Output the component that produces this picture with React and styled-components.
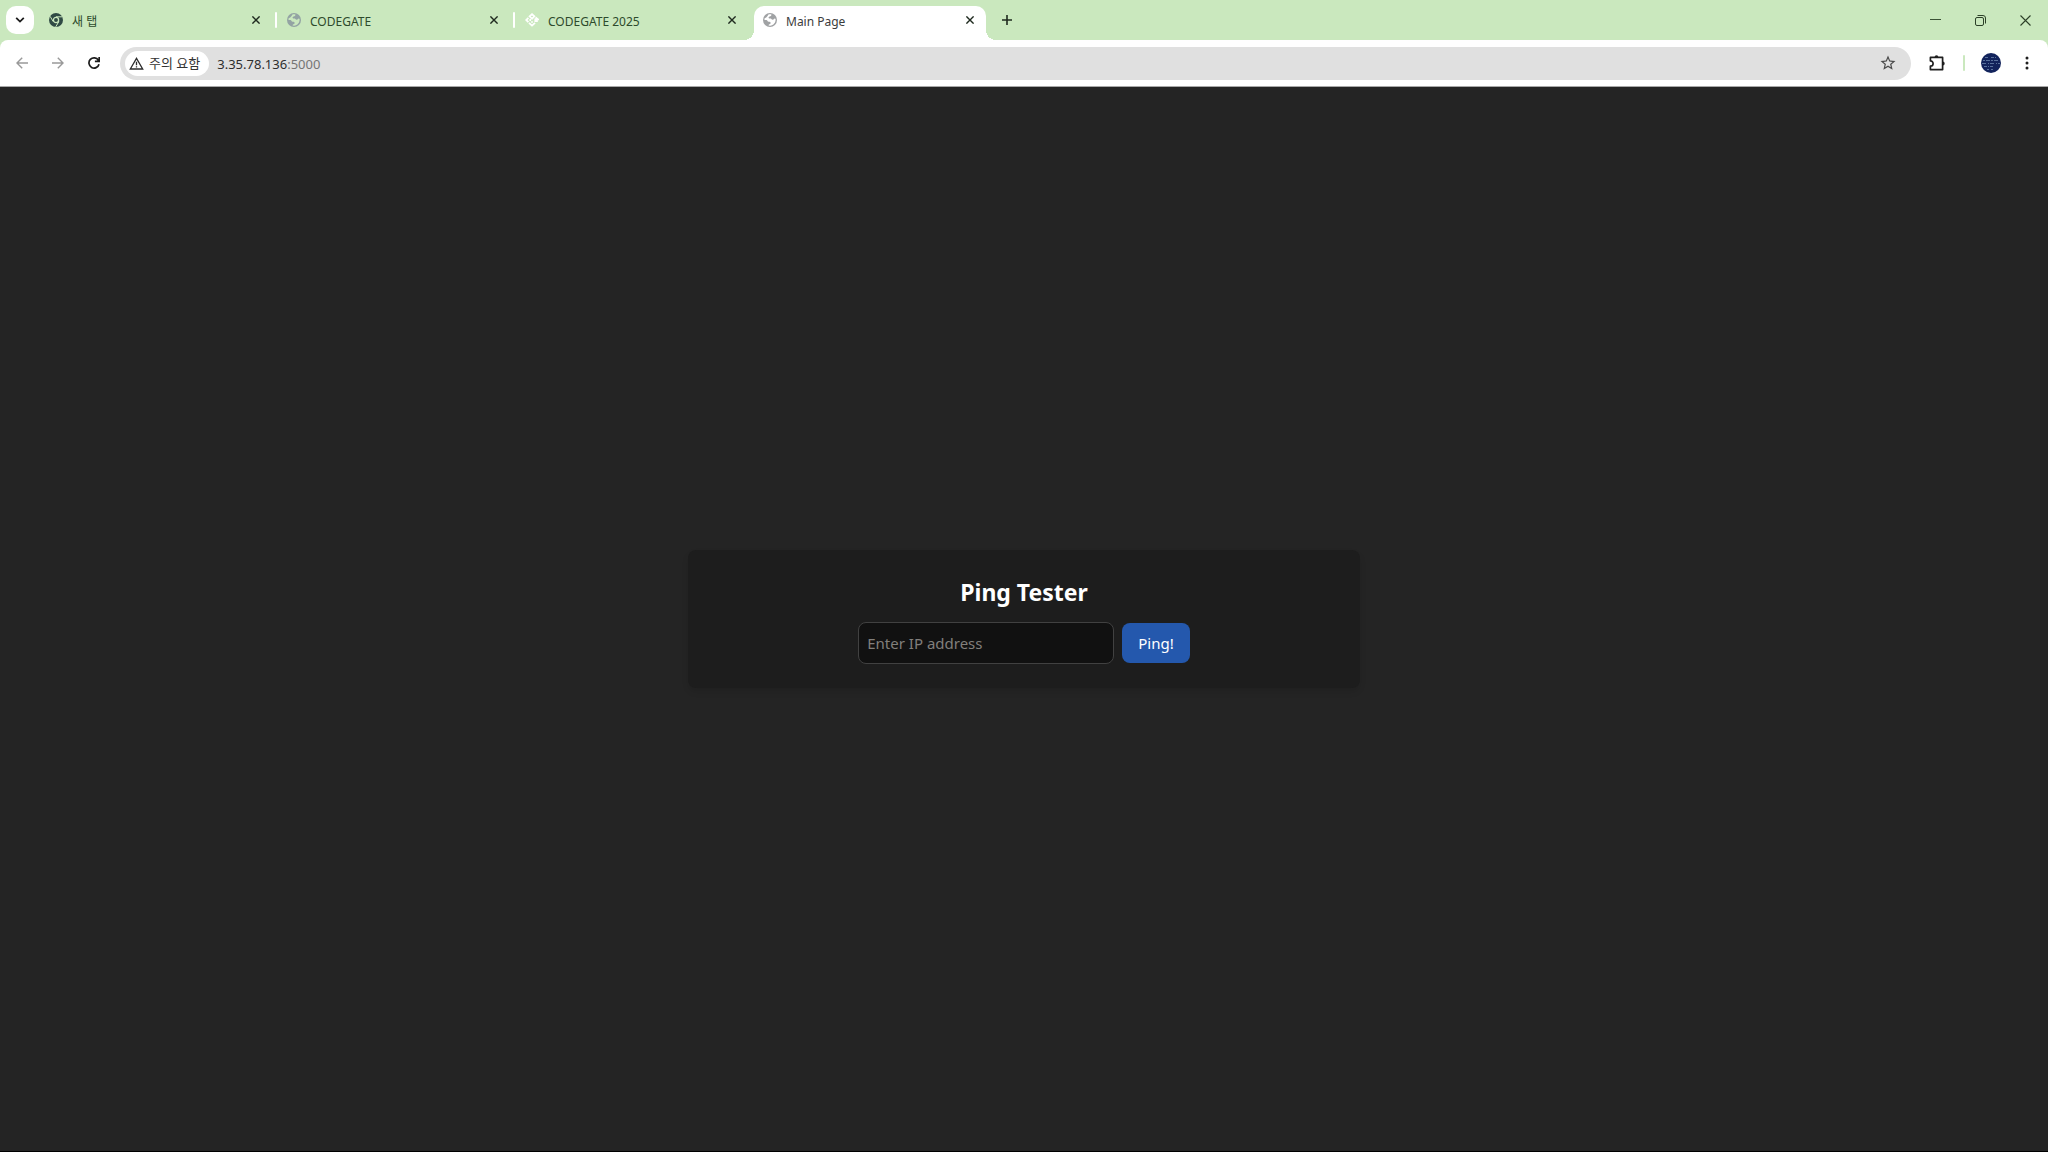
import React, { useState } from 'react';
import styled, { createGlobalStyle } from 'styled-components';

const GlobalStyle = createGlobalStyle`
* {
  box-sizing: border-box;
}
body {
  margin: 0;
  background-color: #000;
  font-family: "Noto Sans", "Noto Sans CJK KR", sans-serif;
}
button {
  border: none;
  background: none;
  padding: 0;
  font-family: inherit;
}
svg {
  display: block;
  flex-shrink: 0;
}
`;

const Window = styled.div`
  min-height: 100vh;
  display: flex;
  flex-direction: column;
  padding-bottom: 1px;
  background-color: #000;
`;

const TabStrip = styled.div`
  display: flex;
  align-items: center;
  height: 40px;
  padding-left: 6px;
  background-color: #cae8be;
`;

const TabSearch = styled.button`
  display: flex;
  align-items: center;
  justify-content: center;
  width: 28px;
  height: 28px;
  margin-right: 6px;
  border-radius: 10px;
  background-color: #fff;
`;

const Tabs = styled.div`
  display: flex;
  align-self: flex-end;
  gap: 6px;
`;

const Tab = styled.div`
  position: relative;
  display: flex;
  align-items: center;
  width: 232px;
  height: 34px;
  padding: 0 8px 6px 9px;
  border-radius: 10px 10px 0 0;
  background-color: ${({ $active }) => ($active ? '#fff' : 'transparent')};
  color: ${({ $active }) => ($active ? '#3c3c3c' : '#2d4a2c')};

  /* curved feet of the selected tab */
  &::before,
  &::after {
    content: '';
    display: ${({ $active }) => ($active ? 'block' : 'none')};
    position: absolute;
    bottom: 0;
    width: 10px;
    height: 10px;
  }
  &::before {
    right: 100%;
    background: radial-gradient(circle at 0 0, transparent 10px, #fff 10px);
  }
  &::after {
    left: 100%;
    background: radial-gradient(circle at 100% 0, transparent 10px, #fff 10px);
  }
`;

const TabTitle = styled.span`
  flex: 1;
  margin-left: 9px;
  padding-top: 4px;
  font-size: 12px;
  line-height: 16px;
  white-space: nowrap;
`;

const TabClose = styled.button`
  display: flex;
  align-items: center;
  justify-content: center;
  width: 16px;
  height: 16px;
`;

const TabDivider = styled.span`
  position: absolute;
  right: -5px;
  top: 6px;
  width: 2px;
  height: 16px;
  border-radius: 1px;
  background-color: #fff;
`;

const NewTab = styled.button`
  display: flex;
  align-items: center;
  justify-content: center;
  width: 28px;
  height: 28px;
  margin-left: 7px;
`;

const WindowButtons = styled.div`
  display: flex;
  margin-left: auto;
`;

const WindowButton = styled.button`
  display: flex;
  align-items: center;
  justify-content: center;
  width: 45px;
  height: 40px;
`;

const ToolbarBack = styled.div`
  background-color: #cae8be;
`;

const Toolbar = styled.div`
  display: flex;
  align-items: center;
  height: 47px;
  padding: 0 3px 0 4px;
  border-bottom: 1px solid #a8a8a8;
  border-radius: 8px 8px 0 0;
  background-color: #fff;
`;

const ToolButton = styled.button`
  display: flex;
  align-items: center;
  justify-content: center;
  width: 36px;
  height: 34px;
`;

const AddressBar = styled.div`
  display: flex;
  flex: 1;
  align-items: center;
  height: 33px;
  margin: 0 8px;
  padding: 0 14px 0 5px;
  border-radius: 17px;
  background-color: #e0e0e0;
`;

const SecurityChip = styled.button`
  display: flex;
  align-items: center;
  gap: 5px;
  height: 25px;
  padding: 0 9px 0 4px;
  border-radius: 13px;
  background-color: #fff;
  color: #333;
  font-size: 13px;
  line-height: 16px;
  white-space: nowrap;
`;

const Url = styled.span`
  flex: 1;
  margin-left: 8px;
  padding-top: 1px;
  color: #2e2e2e;
  font-size: 13px;
  line-height: 20px;

  span {
    color: #757575;
  }
`;

const ToolDivider = styled.span`
  width: 2px;
  height: 16px;
  margin: 0 8px;
  border-radius: 1px;
  background-color: #cae8be;
`;

const Page = styled.main`
  display: flex;
  flex: 1;
  align-items: center;
  justify-content: center;
  background-color: #242424;
`;

const Card = styled.section`
  width: 100%;
  max-width: 672px;
  padding: 24px;
  border-radius: 8px;
  background-color: #1d1d1d;
  box-shadow: 0 4px 6px rgba(0, 0, 0, 0.1);
  text-align: center;
`;

const Title = styled.h1`
  margin: 0 0 14px;
  padding-top: 2px;
  color: #fff;
  font-size: 23px;
  font-weight: 700;
  line-height: 32px;
`;

const PingForm = styled.form`
  display: flex;
  align-items: center;
  justify-content: center;
  gap: 8px;
`;

const AddressInput = styled.input`
  width: 256px;
  height: 42px;
  padding: 8px;
  border: 1px solid #414141;
  border-radius: 8px;
  outline: none;
  background-color: #111;
  color: #fff;
  font-family: inherit;
  font-size: 15px;

  &::placeholder {
    color: #817f7c;
    opacity: 1;
  }
`;

const PingButton = styled.button`
  height: 40px;
  padding: 0 16px;
  border-radius: 8px;
  background-color: #2458ad;
  color: #fff;
  font-size: 15px;
  line-height: 24px;
`;

const ChromeIcon = () => (
  <svg width="14" height="14" viewBox="0 0 14 14">
    <circle cx="7" cy="7" r="7" fill="#2f4a44" />
    <circle cx="7" cy="7" r="2.6" fill="none" stroke="#cae8be" strokeWidth="1.3" />
    <path d="M7 3.8H13.2M4.2 8.6L1.1 3.3M9.8 8.6L6.7 13.9" stroke="#cae8be" strokeWidth="1" />
  </svg>
);

const GlobeIcon = ({ color, land }) => (
  <svg width="14" height="14" viewBox="0 0 14 14">
    <circle cx="7" cy="7" r="7" fill={color} />
    <path
      d="M8.4 1.4C8.6 2.6 7.6 3.2 6.5 3.4C5.4 3.7 5.2 5 6.2 5.4C7.2 5.7 7.8 5.2 8.4 6C9 7.1 10.4 6.7 11.1 5.9C11.6 5.3 12.4 5.4 12.6 6.1C12.9 9.8 10.4 12.5 7.1 12.7L5.6 12.4C5.3 11.3 7.4 11.3 7.6 10.2C7.8 9.1 6.9 8.7 5.7 8.7C4.5 8.6 4.5 7.2 3.4 7L1.5 7C1.4 6.4 1.5 5.6 1.8 5C3 5.2 3.4 4.2 4.1 3.6C4.8 3 5 2 5.4 1.6C6.4 1.2 7.4 1.2 8.4 1.4Z"
      fill={land}
    />
  </svg>
);

const CodegateIcon = () => (
  <svg width="14" height="14" viewBox="0 0 14 14" fill="none" stroke="#fff" strokeWidth="1.8">
    <path d="M4.6 3.4L7 1.2L9.4 3.4L7 5.8Z" />
    <path d="M3.4 4.8L1.2 7L3.4 9.2M4 9.8L7 12.6L10 9.8" />
    <path d="M10.6 4.4L13 6.4H9.4M9.4 8.2H12.8M4.4 7H6M7 8.2V9.8" />
  </svg>
);

const CloseIcon = () => (
  <svg width="8" height="8" viewBox="0 0 8 8">
    <path d="M0.4 0.4L7.6 7.6M7.6 0.4L0.4 7.6" stroke="#1f2a1f" strokeWidth="1.4" />
  </svg>
);

const tabs = [
  { id: 1, title: '새 탭', icon: <ChromeIcon />, divider: true },
  { id: 2, title: 'CODEGATE', icon: <GlobeIcon color="#93a3a3" land="#cae8be" />, divider: true },
  { id: 3, title: 'CODEGATE 2025', icon: <CodegateIcon /> },
  { id: 4, title: 'Main Page', icon: <GlobeIcon color="#a0a2a4" land="#fff" />, active: true },
];

const BrowserTabs = () => (
  <TabStrip>
    <TabSearch aria-label="탭 검색">
      <svg width="10" height="6" viewBox="0 0 10 6" fill="none" stroke="#1c1c1c" strokeWidth="1.8">
        <path d="M1.2 0.9L5 4.6L8.8 0.9" />
      </svg>
    </TabSearch>
    <Tabs>
      {tabs.map((tab) => (
        <Tab key={tab.id} $active={tab.active}>
          {tab.icon}
          <TabTitle>{tab.title}</TabTitle>
          <TabClose aria-label="닫기">
            <CloseIcon />
          </TabClose>
          {tab.divider && <TabDivider />}
        </Tab>
      ))}
    </Tabs>
    <NewTab aria-label="새 탭">
      <svg width="10" height="10" viewBox="0 0 10 10" stroke="#1f2a1f" strokeWidth="1.6">
        <path d="M5 0V10M0 5H10" />
      </svg>
    </NewTab>
    <WindowButtons>
      <WindowButton aria-label="최소화">
        <svg width="11" height="11" viewBox="0 0 11 11" stroke="#3b5236">
          <path d="M0 4.5H11" />
        </svg>
      </WindowButton>
      <WindowButton aria-label="이전 크기로 복원">
        <svg width="11" height="11" viewBox="0 0 11 11" fill="none" stroke="#2c4028">
          <rect x="0.5" y="2.5" width="8" height="8" rx="1.5" />
          <path d="M2.5 0.5H8A2.5 2.5 0 0 1 10.5 3V8.5" />
        </svg>
      </WindowButton>
      <WindowButton aria-label="창 닫기">
        <svg width="11" height="11" viewBox="0 0 11 11" stroke="#2c4028" strokeWidth="1.1">
          <path d="M0.5 0.5L10.5 10.5M10.5 0.5L0.5 10.5" />
        </svg>
      </WindowButton>
    </WindowButtons>
  </TabStrip>
);

const BrowserToolbar = () => (
  <ToolbarBack>
    <Toolbar>
      <ToolButton aria-label="뒤로">
        <svg width="12" height="12" viewBox="0 0 12 12" fill="none" stroke="#999" strokeWidth="1.4">
          <path d="M12 6H1M6.2 0.8L1 6L6.2 11.2" />
        </svg>
      </ToolButton>
      <ToolButton aria-label="앞으로">
        <svg width="12" height="12" viewBox="0 0 12 12" fill="none" stroke="#999" strokeWidth="1.4">
          <path d="M0 6H11M5.8 0.8L11 6L5.8 11.2" />
        </svg>
      </ToolButton>
      <ToolButton aria-label="새로고침">
        <svg width="12" height="12" viewBox="0 0 12 12" fill="none" stroke="#1c1c1c" strokeWidth="1.7">
          <path d="M11 7.2A5.1 5.1 0 1 1 10.4 3.3M11.2 0V4.3H6.9" />
        </svg>
      </ToolButton>
      <AddressBar>
        <SecurityChip>
          <svg width="15" height="13" viewBox="0 0 15 13" fill="none" stroke="#2c2c2c" strokeWidth="1.3">
            <path d="M7.5 1.3L13.7 12H1.3Z" />
            <path d="M7.5 4.8V8.2M7.5 9.2V10.6" />
          </svg>
          주의 요함
        </SecurityChip>
        <Url>
          3.35.78.136<span>:5000</span>
        </Url>
        <button aria-label="북마크 추가">
          <svg width="18" height="18" viewBox="0 0 24 24" fill="#4a4a4a">
            <path d="M22 9.24l-7.19-.62L12 2 9.19 8.63 2 9.24l5.46 4.73L5.82 21 12 17.27 18.18 21l-1.63-7.03L22 9.24zM12 15.4l-3.76 2.27 1-4.28-3.32-2.88 4.38-.38L12 6.1l1.71 4.04 4.38.38-3.32 2.88 1 4.28L12 15.4z" />
          </svg>
        </button>
      </AddressBar>
      <ToolButton aria-label="확장 프로그램">
        <svg width="18" height="18" viewBox="0 0 18 18" fill="none" stroke="#1f1f1f" strokeWidth="1.7">
          <path d="M2.4 3.4H14.6V15.6H2.4V12.2A2.7 2.7 0 0 0 2.4 6.8Z" strokeLinejoin="round" />
          <path d="M6.6 3.2A1.9 1.9 0 0 1 10.4 3.2ZM14.8 7.6A1.9 1.9 0 0 1 14.8 11.4Z" fill="#1f1f1f" stroke="none" />
        </svg>
      </ToolButton>
      <ToolDivider />
      <ToolButton aria-label="프로필">
        <svg width="20" height="20" viewBox="0 0 20 20">
          <circle cx="10" cy="10" r="10" fill="#12235c" />
          <g fill="none" stroke="#58709c" strokeWidth="1">
            <path d="M4 4.5H8M10 4.5H15" strokeDasharray="3 1" />
            <path d="M2 7.5H18" strokeDasharray="2 1 4 1" />
            <path d="M1 10.5H19" strokeDasharray="4 2 1 1" />
            <path d="M3 13.5H12" strokeDasharray="3 1 1 1" />
            <path d="M6 16.5H13" strokeDasharray="2 2" />
          </g>
        </svg>
      </ToolButton>
      <ToolButton aria-label="메뉴">
        <svg width="4" height="16" viewBox="0 0 4 16" fill="#1f1f1f">
          <circle cx="2" cy="3" r="1.5" />
          <circle cx="2" cy="8" r="1.5" />
          <circle cx="2" cy="13" r="1.5" />
        </svg>
      </ToolButton>
    </Toolbar>
  </ToolbarBack>
);

const App = () => {
  const [ip, setIp] = useState('');

  const handleSubmit = (e) => {
    e.preventDefault();
  };

  return (
    <Window>
      <GlobalStyle />
      <BrowserTabs />
      <BrowserToolbar />
      <Page>
        <Card>
          <Title>Ping Tester</Title>
          <PingForm onSubmit={handleSubmit}>
            <AddressInput
              type="text"
              aria-label="IP address"
              placeholder="Enter IP address"
              value={ip}
              onChange={(e) => setIp(e.target.value)}
            />
            <PingButton type="submit">Ping!</PingButton>
          </PingForm>
        </Card>
      </Page>
    </Window>
  );
};

export default App;
